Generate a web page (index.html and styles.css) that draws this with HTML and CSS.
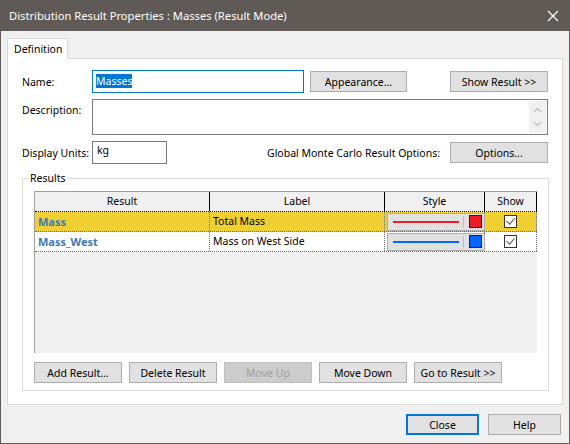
FILE: index.html
```html
<!DOCTYPE html>
<html lang="en">
<head>
    <meta charset="UTF-8">
    <title>Distribution Result Properties</title>
    <link rel="stylesheet" href="styles.css">
</head>
<body>
    <div class="window">
        <div class="titlebar">
            <span class="title">Distribution Result Properties : Masses (Result Mode)</span>
            <svg class="close-x" width="12" height="12" viewBox="0 0 12 12">
                <path d="M1 1L11 11M11 1L1 11" stroke="#fff" stroke-width="1.2"/>
            </svg>
        </div>
        <div class="content">
            <div class="tabs">
                <div class="tab">Definition</div>
            </div>
            <div class="panel">
                <div class="row row-name">
                    <label class="lbl">Name:</label>
                    <div class="field field-name"><span class="sel">Masses</span></div>
                    <button class="btn btn-appearance">Appearance...</button>
                    <button class="btn btn-show">Show Result &gt;&gt;</button>
                </div>
                <div class="row row-desc">
                    <label class="lbl lbl-top">Description:</label>
                    <div class="field field-desc">
                        <div class="scroll">
                            <svg width="9" height="6" viewBox="0 0 9 6"><path d="M1 5L4.5 1.5L8 5" fill="none" stroke="#bcbcbc" stroke-width="1.2"/></svg>
                            <svg width="9" height="6" viewBox="0 0 9 6"><path d="M1 1L4.5 4.5L8 1" fill="none" stroke="#bcbcbc" stroke-width="1.2"/></svg>
                        </div>
                    </div>
                </div>
                <div class="row row-units">
                    <label class="lbl">Display Units:</label>
                    <div class="field field-units">kg</div>
                    <span class="mc-label">Global Monte Carlo Result Options:</span>
                    <button class="btn btn-options">Options...</button>
                </div>
                <fieldset class="group">
                    <legend>Results</legend>
                    <div class="grid">
                        <div class="grid-head">
                            <div class="hcell c-result">Result</div>
                            <div class="hcell c-label">Label</div>
                            <div class="hcell c-style">Style</div>
                            <div class="hcell c-show">Show</div>
                        </div>
                        <div class="grid-row selected">
                            <div class="cell c-result name">Mass</div>
                            <div class="cell c-label">Total Mass</div>
                            <div class="cell c-style">
                                <div class="swatch">
                                    <span class="line" style="background: #ed1c24"></span>
                                    <span class="sep"></span>
                                    <span class="box" style="background: #ed1c24"></span>
                                </div>
                            </div>
                            <div class="cell c-show"><span class="check"></span></div>
                        </div>
                        <div class="grid-row">
                            <div class="cell c-result name">Mass_West</div>
                            <div class="cell c-label">Mass on West Side</div>
                            <div class="cell c-style">
                                <div class="swatch">
                                    <span class="line" style="background: #0066ff"></span>
                                    <span class="sep"></span>
                                    <span class="box" style="background: #0066ff"></span>
                                </div>
                            </div>
                            <div class="cell c-show"><span class="check"></span></div>
                        </div>
                    </div>
                    <div class="group-buttons">
                        <button class="btn">Add Result...</button>
                        <button class="btn">Delete Result</button>
                        <button class="btn disabled">Move Up</button>
                        <button class="btn">Move Down</button>
                        <button class="btn">Go to Result &gt;&gt;</button>
                    </div>
                </fieldset>
            </div>
            <div class="footer">
                <button class="btn btn-dlg default">Close</button>
                <button class="btn btn-dlg">Help</button>
            </div>
        </div>
    </div>
</body>
</html>
```
FILE: styles.css
```css
body {
    margin: 0;
    background: #f0f0f0;
    font-family: "Noto Sans", "Open Sans", sans-serif;
    font-size: 10.5px;
    color: #000;
}
.window {
    width: 570px;
    height: 444px;
    box-sizing: border-box;
    border: 1px solid #5f5a55;
    border-top: none;
    background: #f0f0f0;
    display: flex;
    flex-direction: column;
}
.titlebar {
    height: 31px;
    background: #5f5a55;
    color: #fff;
    display: flex;
    align-items: center;
    justify-content: space-between;
    padding: 0 11px 0 9px;
    margin: 0 -1px;
    font-size: 11.2px;
}
.close-x {
    display: block;
}
.content {
    padding: 7px 6px 0 6px;
}
.tabs {
    display: flex;
    height: 20px;
    position: relative;
    z-index: 1;
}
.tab {
    width: 61px;
    height: 21px;
    box-sizing: border-box;
    background: #fff;
    border: 1px solid #d9d9d9;
    border-bottom: none;
    padding: 3px 0 0 6px;
}
.panel {
    background: #fff;
    border: 1px solid #d9d9d9;
    height: 347px;
    box-sizing: border-box;
    padding: 11px 14px 0 13px;
}
.row {
    display: flex;
    align-items: center;
}
.lbl {
    width: 70px;
    padding-left: 1px;
}
.lbl-top {
    align-self: flex-start;
    padding-top: 4px;
}
.field {
    box-sizing: border-box;
    border: 1px solid #7a7a7a;
    background: #fff;
    height: 23px;
    padding: 3px 3px;
}
.field-name {
    width: 212px;
    border-color: #0078d7;
}
.sel {
    background: #0078d7;
    color: #fff;
}
.btn {
    font-family: inherit;
    font-size: 10.5px;
    color: #000;
    background: #e1e1e1;
    border: 1px solid #adadad;
    height: 21px;
    padding: 0;
    box-sizing: border-box;
}
.btn-appearance {
    width: 97px;
    margin-left: 6px;
}
.btn-show {
    width: 98px;
    margin-left: auto;
}
.row-desc {
    margin-top: 6px;
    align-items: flex-start;
}
.field-desc {
    flex: 1;
    height: 36px;
    padding: 1px;
    display: flex;
    justify-content: flex-end;
}
.scroll {
    width: 17px;
    background: #f0f0f0;
    display: flex;
    flex-direction: column;
    align-items: center;
    justify-content: space-around;
    padding: 2px 0;
}
.row-units {
    margin-top: 6px;
}
.field-units {
    width: 75px;
    padding: 1px 4px;
}
.mc-label {
    margin-left: auto;
    margin-right: 10px;
}
.btn-options {
    width: 98px;
}
.group {
    margin: 6px 0 0 1px;
    width: 527px;
    height: 221px;
    box-sizing: border-box;
    border: 1px solid #dcdcdc;
    padding: 5px 11px 0 11px;
}
.group legend {
    padding: 0 2px;
    margin-left: -6px;
    line-height: 16px;
}
.grid {
    height: 161px;
    background: #f0f0f0;
    border-left: 1px solid #a0a0a0;
    border-top: 1px solid #a0a0a0;
}
.grid-head {
    display: flex;
    height: 19px;
    border-bottom: 1px dotted #000;
}
.hcell {
    text-align: center;
    box-sizing: border-box;
    border-right: 1px solid #000;
    line-height: 18px;
}
.c-result { width: 175px; }
.c-label { width: 175px; }
.c-style { width: 100px; }
.c-show { width: 52px; }
.grid-row {
    display: flex;
    height: 20px;
    background: #fff;
    border-bottom: 1px dotted #6a6a6a;
    box-sizing: border-box;
}
.grid-row.selected {
    background: #f0d030;
}
.cell {
    box-sizing: border-box;
    border-right: 1px dotted #6a6a6a;
    padding: 0 3px;
    line-height: 19px;
    display: flex;
    align-items: center;
}
.cell.name {
    font-weight: bold;
    color: #3e78b2;
    font-size: 11px;
}
.cell.c-style {
    padding: 1px 2px;
}
.swatch {
    flex: 1;
    height: 16px;
    background: #e1e1e1;
    border: 1px solid #adadad;
    display: flex;
    align-items: center;
    padding: 0 2px 0 5px;
}
.line {
    width: 66px;
    height: 2px;
}
.sep {
    width: 1px;
    height: 12px;
    background: #bcbcbc;
    margin: 0 5px 0 4px;
}
.box {
    width: 11px;
    height: 11px;
    border: 1px solid #222;
}
.cell.c-show {
    justify-content: center;
}
.check {
    width: 13px;
    height: 13px;
    box-sizing: border-box;
    border: 1px solid #333;
    background: #fff;
    position: relative;
}
.check::after {
    content: "";
    position: absolute;
    left: 3px;
    top: 0;
    width: 4px;
    height: 7px;
    border: solid #555;
    border-width: 0 1px 1px 0;
    transform: rotate(40deg);
}
.group-buttons {
    display: flex;
    gap: 7px;
    margin-top: 9px;
}
.group-buttons .btn {
    width: 88px;
}
.btn.disabled {
    color: #a0a0a0;
    background: #cccccc;
    border-color: #bfbfbf;
}
.footer {
    display: flex;
    justify-content: flex-end;
    gap: 9px;
    padding: 9px 2px 0 0;
}
.btn-dlg {
    width: 73px;
    height: 21px;
}
.btn-dlg.default {
    border: 2px solid #0078d7;
}
```
